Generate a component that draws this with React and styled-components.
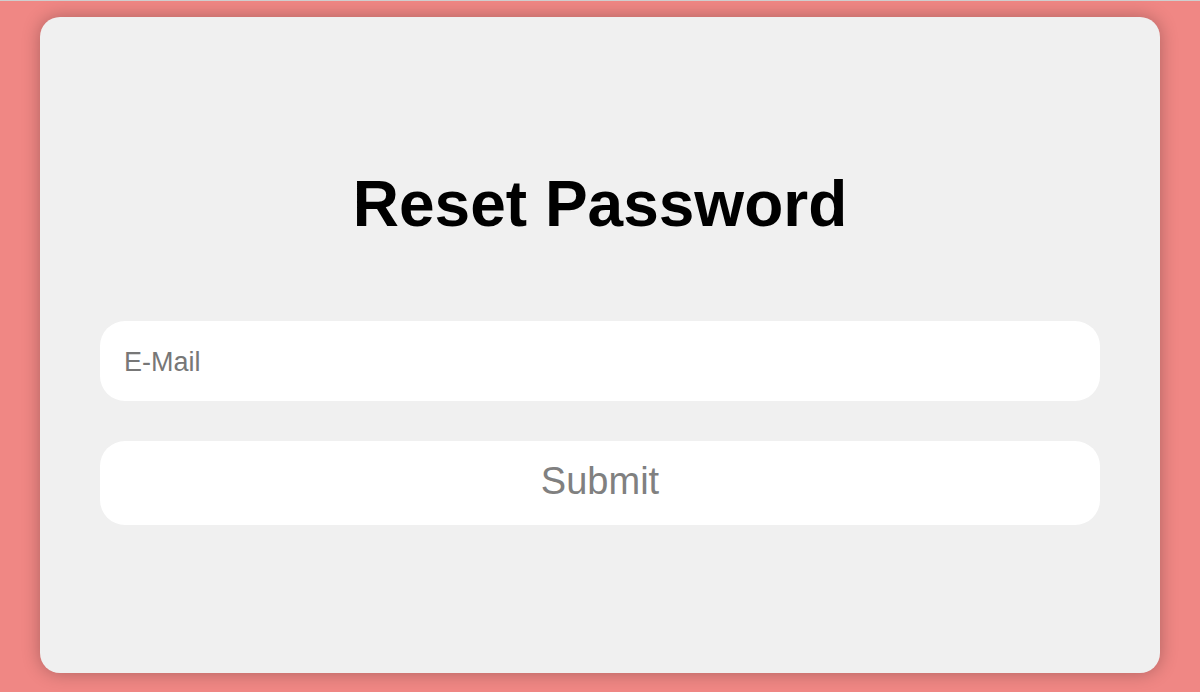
import React from "react";
import styled, { createGlobalStyle } from "styled-components";

const GlobalStyle = createGlobalStyle`
  html, body {
    margin: 0;
    padding: 0;
  }
  body {
    background: #f08784;
    border-top: 1px solid #cfcfcf;
    font-family: "Liberation Sans", Arial, sans-serif;
  }
  * {
    box-sizing: border-box;
  }
`;

const Page = styled.div`
  height: 691px;
  padding: 16px 40px 19px;
  display: flex;
`;

const Card = styled.div`
  flex: 1;
  background: #f0f0f0;
  border-radius: 20px;
  box-shadow: 0 0 18px rgba(0, 0, 0, 0.28);
  padding: 150px 60px 0;
  display: flex;
  flex-direction: column;
`;

const Title = styled.h1`
  margin: 0 0 80px;
  font-size: 64px;
  line-height: 74px;
  font-weight: 700;
  color: #000;
  text-align: center;
`;

const Form = styled.form`
  display: flex;
  flex-direction: column;
  gap: 40px;
`;

const Input = styled.input`
  height: 80px;
  border: none;
  outline: none;
  border-radius: 25px;
  background: #fff;
  padding: 2px 24px 0;
  font-family: inherit;
  font-size: 27px;
  color: #333;
  &::placeholder {
    color: #777;
  }
`;

const Button = styled.button`
  height: 84px;
  border: none;
  border-radius: 25px;
  background: #fff;
  padding: 0 0 4px;
  font-family: inherit;
  font-size: 38px;
  color: #808080;
  cursor: pointer;
`;

export default function App() {
  return (
    <>
      <GlobalStyle />
      <Page>
        <Card>
          <Title>Reset Password</Title>
          <Form onSubmit={(e) => e.preventDefault()}>
            <Input type="email" placeholder="E-Mail" />
            <Button type="submit">Submit</Button>
          </Form>
        </Card>
      </Page>
    </>
  );
}
